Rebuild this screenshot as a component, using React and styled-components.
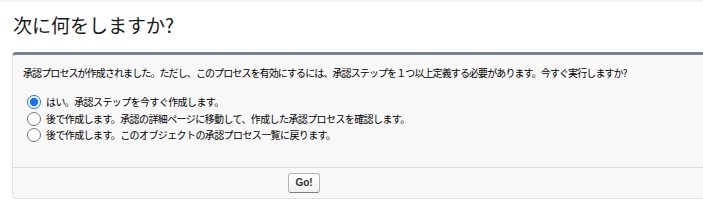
import React, { useState } from "react";
import styled, { createGlobalStyle } from "styled-components";

const GlobalStyle = createGlobalStyle`
  html, body {
    margin: 0;
    padding: 0;
    background: #ffffff;
    overflow: hidden;
  }
  body {
    font-family: "Noto Sans CJK JP", "Noto Sans", sans-serif;
    color: #000;
  }
`;

const Page = styled.div`
  width: 703px;
  height: 222px;
  border-top: 2px solid #f2f3f5;
  box-sizing: border-box;
  padding-left: 12px;
`;

const Title = styled.h1`
  margin: 0;
  padding: 10px 0 0 1px;
  height: 40px;
  font-size: 19px;
  font-weight: 400;
  line-height: 26px;
  color: #1a1a1a;
`;

const Panel = styled.div`
  margin-right: -20px;
  background: #f8f8f8;
  border: 1px solid #e3e3e3;
  border-top: 3px solid #7b8199;
  border-radius: 4px;
`;

const Body = styled.div`
  padding: 11px 10px 23px 10px;
  border-bottom: 1px solid #dcdcdc;
`;

const Message = styled.p`
  margin: 0 0 14px 0;
  font-size: 10px;
  letter-spacing: -0.9px;
  line-height: 14px;
`;

const Options = styled.div`
  display: flex;
  flex-direction: column;
  padding-left: 4px;
`;

const Option = styled.label`
  display: flex;
  align-items: center;
  height: 16.5px;
  font-size: 10px;
  letter-spacing: -0.6px;
  line-height: 16px;
  cursor: pointer;
`;

const Radio = styled.input`
  width: 14px;
  height: 14px;
  margin: 0 5px 0 0;
  accent-color: #1a73e8;
`;

const Footer = styled.div`
  display: flex;
  align-items: center;
  height: 30px;
  padding-left: 275px;
`;

const GoButton = styled.button`
  width: 32px;
  height: 20px;
  padding: 0;
  font-family: "Liberation Sans", Arial, sans-serif;
  font-size: 10px;
  font-weight: 700;
  color: #333;
  background: linear-gradient(#ffffff, #f1f1f1);
  border: 1px solid #b5b5b5;
  border-bottom-color: #7f7f7f;
  border-radius: 3px;
  cursor: pointer;
`;

const choices = [
  "はい。承認ステップを今すぐ作成します。",
  "後で作成します。承認の詳細ページに移動して、作成した承認プロセスを確認します。",
  "後で作成します。このオブジェクトの承認プロセス一覧に戻ります。",
];

export default function App() {
  const [picked, setPicked] = useState(0);
  return (
    <Page>
      <GlobalStyle />
      <Title>次に何をしますか?</Title>
      <Panel>
        <Body>
          <Message>
            承認プロセスが作成されました。ただし、このプロセスを有効にするには、承認ステップを１つ以上定義する必要があります。今すぐ実行しますか?
          </Message>
          <Options>
            {choices.map((c, i) => (
              <Option key={i}>
                <Radio
                  type="radio"
                  name="next"
                  checked={picked === i}
                  onChange={() => setPicked(i)}
                />
                {c}
              </Option>
            ))}
          </Options>
        </Body>
        <Footer>
          <GoButton>Go!</GoButton>
        </Footer>
      </Panel>
    </Page>
  );
}
